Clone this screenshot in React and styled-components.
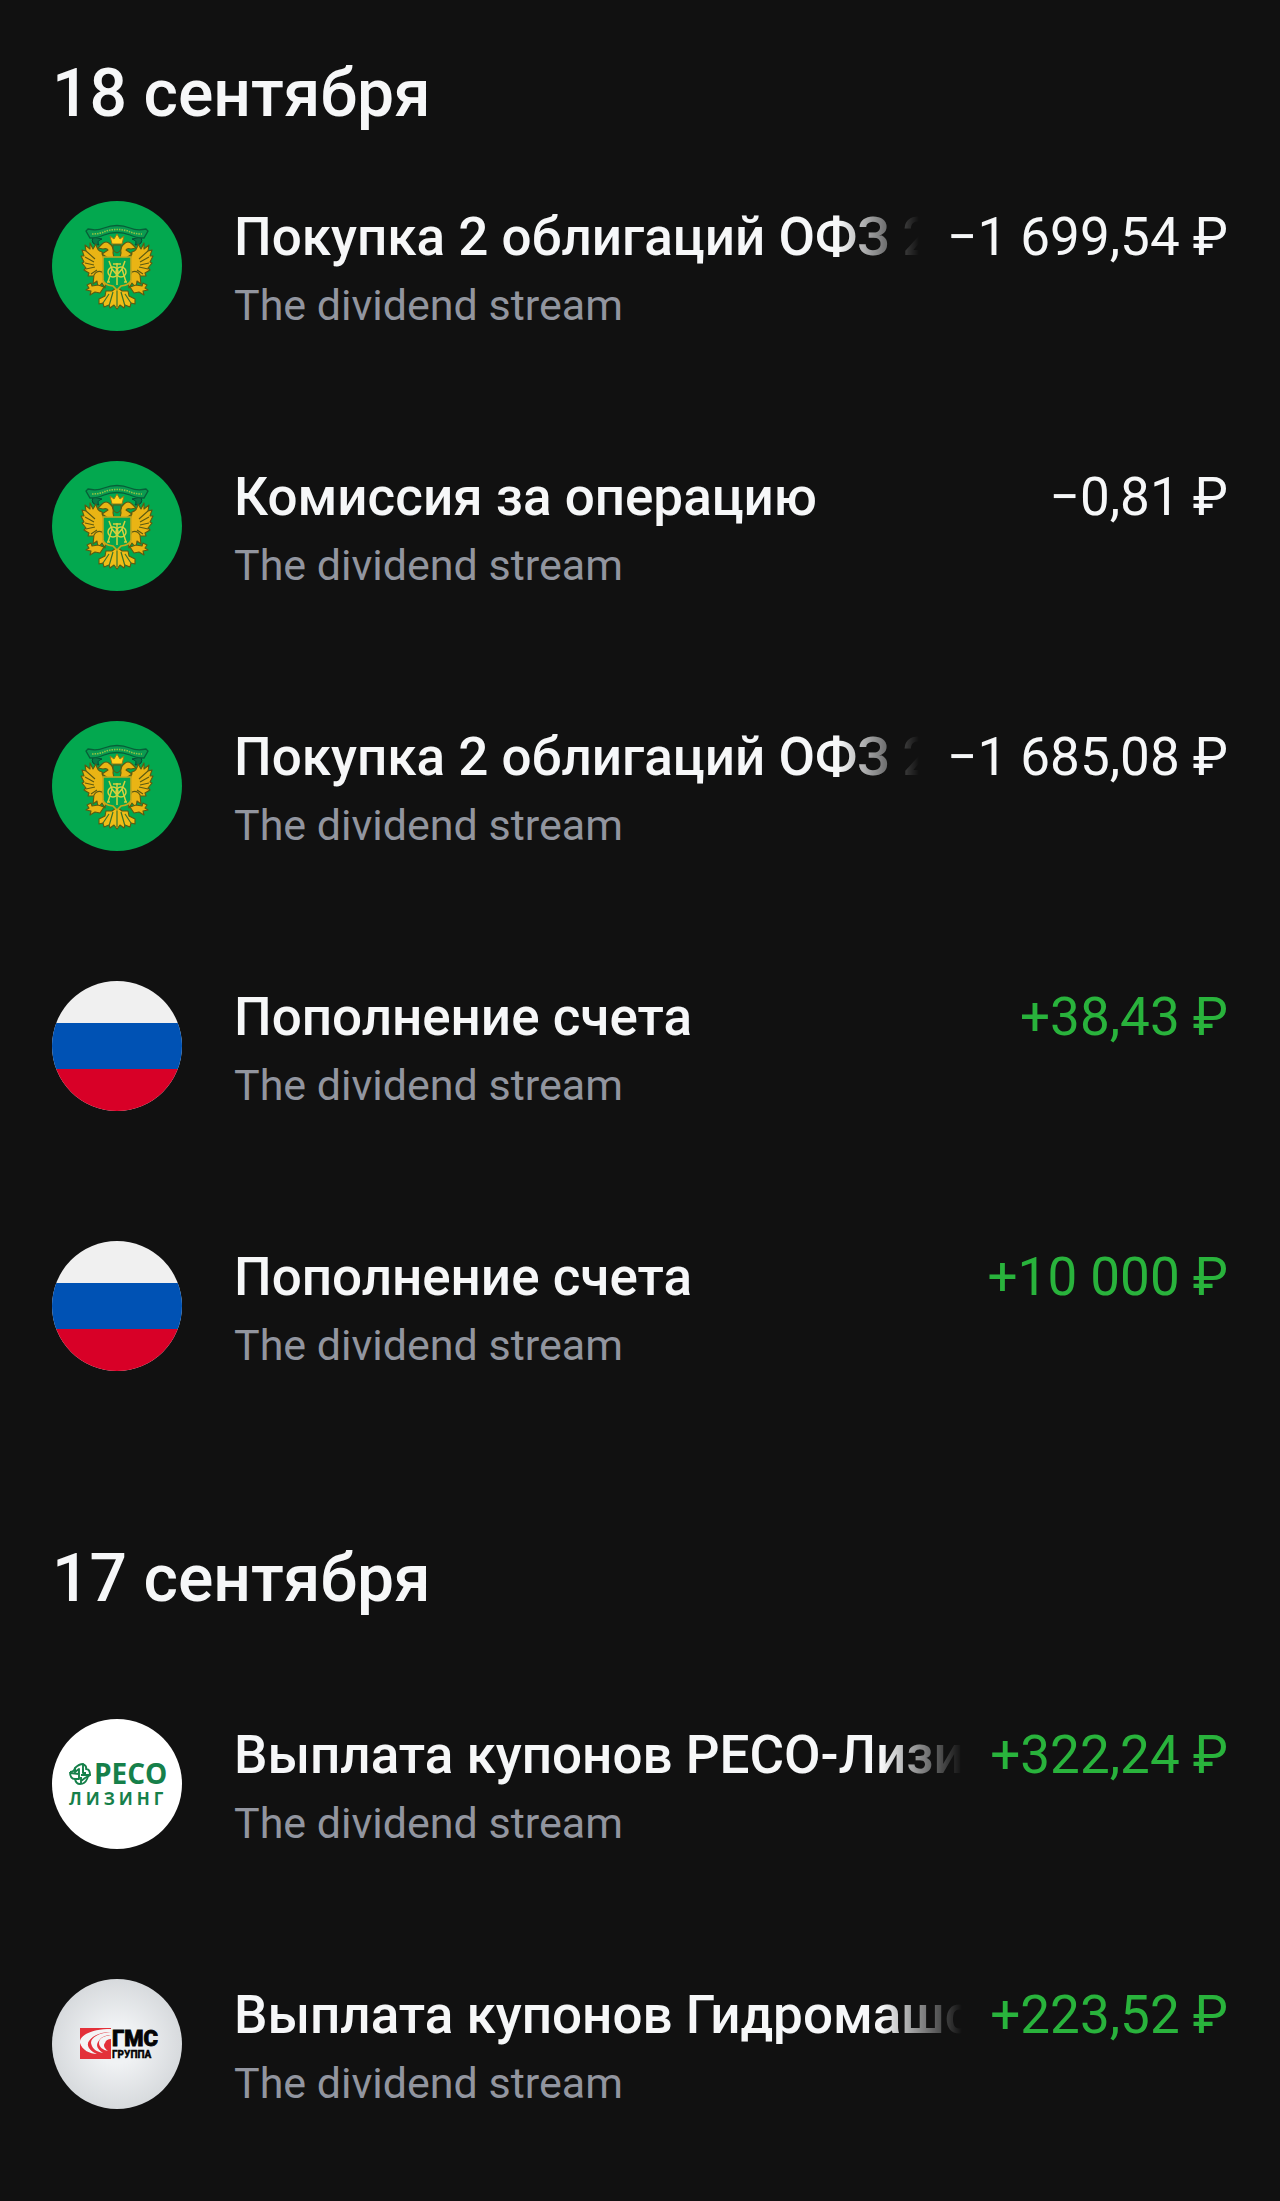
import React from "react";
import styled, { createGlobalStyle } from "styled-components";

const GlobalStyle = createGlobalStyle`
  body {
    margin: 0;
    background-color: #111111;
    color: #f6f7f8;
    font-family: Roboto, "Noto Sans", sans-serif;
  }
`;

const Feed = styled.main`
  box-sizing: border-box;
  min-height: 100vh;
  padding: 54px 52px 80px;
`;

const Day = styled.section`
  & + & {
    margin-top: 162px;
  }
`;

const DayTitle = styled.h2`
  margin: 0 0 ${(props) => (props.$spaced ? "100px" : "67px")};
  font-size: 66px;
  line-height: 80px;
  font-weight: 500;
`;

const OperationList = styled.ul`
  display: flex;
  flex-direction: column;
  gap: 124px;
  margin: 0;
  padding: 0;
  list-style: none;
`;

const OperationRow = styled.li`
  display: flex;
  align-items: flex-start;
  gap: 52px;
`;

const Avatar = styled.svg`
  flex: none;
  width: 130px;
  height: 130px;
  border-radius: 50%;
`;

const Details = styled.div`
  flex: 1;
  min-width: 0;
`;

const TopLine = styled.div`
  display: flex;
  gap: 28px;
  font-size: 53px;
  line-height: 72px;
`;

const Title = styled.span`
  flex: 1;
  min-width: 0;
  overflow: hidden;
  white-space: nowrap;
  font-weight: 500;
  mask-image: linear-gradient(to right, #000 calc(100% - 80px), transparent);
`;

const Amount = styled.span`
  white-space: nowrap;
  color: ${(props) => (props.$income ? "#29b33c" : "inherit")};
`;

const Account = styled.div`
  color: #92959f;
  font-size: 43px;
  line-height: 64px;
`;

const EagleHalf = () => (
  <g fill="#e9b414" stroke="#5b5a12" strokeWidth="1.1" strokeLinejoin="round">
    <path d="M50 51q-5-1-6-8l-3 5-3-6v6l-5-4 1 6-4-1 2 6-3 0 3 6-2 1 4 5-2 2 5 3-1 3 7 0-1 5 6-5 4 2-1-7 3-3z" />
    <path d="M34 50l9 8M33 56l9 5M33 62l9 2M34 68l9-2M39 73l6-4" fill="none" />
    <path d="M50 71q-5-2-8 3l-1 9 4-3 1 7 4-5 3 5 1-9z" />
    <path d="M46 84l-6 1-1-3-4 2 2 3-3 2 5 1-1 4 5-3 5 1 4-6z" />
    <path d="M61 52q1-6-3-9-4-4-8 0l-4 4 5 1q4-1 5 1l-6 4 6 4h6z" />
  </g>
);

const MinfinLogo = () => (
  <Avatar viewBox="0 0 130 130" aria-hidden="true">
    <rect width="130" height="130" fill="#03a84f" />
    <path d="M41 36q-3 8 6 8-3-4 3-6zM89 36q3 8-6 8 3-4-3-6z" fill="#0a7a46" stroke="#064c35" />
    <path
      d="M36 28q9 2 16-1 13-5 26 0 7 3 16 1l2 2-4 7q-8 0-14-3-13-5-26 0-6 3-14 3l-4-7z"
      fill="#0b9a50"
      stroke="#075f38"
      strokeWidth="1.3"
    />
    <path d="M40 33q8 0 14-3 11-3 22 0 6 3 14 3" fill="none" stroke="#8fc443" strokeWidth="1.6" strokeDasharray="1.5 1" />
    <EagleHalf />
    <g transform="matrix(-1 0 0 1 130 0)">
      <EagleHalf />
    </g>
    <path d="M60 43l-2-8 4 3 3-5 3 5 4-3-2 8z" fill="#ffd21c" stroke="#927716" />
    <path d="M61 44h8v4q-1 3-4 4-3-1-4-4z" fill="#09994e" stroke="#5b5a12" />
    <path
      d="M65 86l-5 4-6 0-1 5-6 3 0 5 4-1 1 4 5-2 1 3 4-3 3 4 3-4 4 3 1-3 5 2 1-4 4 1 0-5-6-3-1-5-6 0z"
      fill="#efbd17"
      stroke="#5b5a12"
      strokeWidth="1.1"
      strokeLinejoin="round"
    />
    <path d="M65 89v17M61 91l-4 14M69 91l4 14M57 93l-6 9M73 93l6 9" stroke="#3a742b" strokeWidth="1.2" />
    <path d="M51 56h28v23q-1 5-10 6l-4 4-4-4q-9-1-10-6z" fill="#04a650" stroke="#c9a71b" strokeWidth="1.6" />
    <g fill="none" stroke="#d5d13d" strokeWidth="1.5">
      <path d="M57 60l3 8-4 13M73 60l-3 8 4 13M60 68l5 6 5-6M65 62v22M61 63h8M55 81h3M72 81h3" />
      <ellipse cx="61" cy="71" rx="5" ry="5" />
      <ellipse cx="69" cy="71" rx="5" ry="5" />
    </g>
  </Avatar>
);

const FlagLogo = () => (
  <Avatar viewBox="0 0 130 130" aria-hidden="true">
    <rect width="130" height="130" fill="#f0f0f0" />
    <rect y="42" width="130" height="46" fill="#0052b4" />
    <rect y="88" width="130" height="42" fill="#d80027" />
  </Avatar>
);

const ResoLogo = () => (
  <Avatar viewBox="0 0 130 130">
    <rect width="130" height="130" fill="#fff" />
    <g fill="none" stroke="#16804a" strokeWidth="1.9" strokeLinejoin="round">
      <path d="M27 54V50l-4 3V49q4-4 8-4v9M18 54l9 1M18 53q0 7 5 7h4v-6" />
      <path d="M31 45q4 2 3 5 4 0 4 6-2 0-3 4-2 5-7 5-4 0-5-5M23 49q-1 4-5 4" />
      <path d="M31 50v4h3M29 58v4l4-3 5-3h-9M29 65v-3" />
    </g>
    <g fill="#16804a" fontFamily="'Open Sans', sans-serif" fontWeight="700">
      <text x="42" y="65" fontSize="28">РЕСО</text>
      <text x="17" y="86" fontSize="17" letterSpacing="4">ЛИЗИНГ</text>
    </g>
  </Avatar>
);

const GmsLogo = () => (
  <Avatar viewBox="0 0 130 130">
    <defs>
      <radialGradient id="gmsShade">
        <stop offset="0.3" stopColor="#f0f2f4" />
        <stop offset="1" stopColor="#d7dadd" />
      </radialGradient>
    </defs>
    <rect width="130" height="130" fill="url(#gmsShade)" />
    <rect x="28" y="49" width="31" height="31" fill="#e3313a" />
    <g fill="#f4f4f5">
      <path d="M59 50C40 50 27 56 28 64c2 7 10 11 17 11-8-3-11-9-8-13 4-6 13-9 22-9z" />
      <path d="M59 53c-12 1-20 5-20 11 1 6 6 9 12 10-6-4-7-8-5-11 3-5 7-7 13-7z" />
      <path d="M59 56c-7 1-12 3-12 8 0 4 4 7 9 8-4-3-5-6-3-8 1-3 3-4 6-4z" />
    </g>
    <g fill="#050505" stroke="#050505" fontFamily="Roboto, sans-serif" fontWeight="900">
      <text x="60" y="67" fontSize="22" strokeWidth="0.8">ГМС</text>
      <text x="60" y="79" fontSize="10" strokeWidth="0.3">ГРУППА</text>
    </g>
  </Avatar>
);

const ACCOUNT = "The dividend stream";

const days = [
  {
    date: "18 сентября",
    operations: [
      { logo: MinfinLogo, title: "Покупка 2 облигаций ОФЗ 2", amount: "−1 699,54 ₽" },
      { logo: MinfinLogo, title: "Комиссия за операцию", amount: "−0,81 ₽" },
      { logo: MinfinLogo, title: "Покупка 2 облигаций ОФЗ 2", amount: "−1 685,08 ₽" },
      { logo: FlagLogo, title: "Пополнение счета", amount: "+38,43 ₽", income: true },
      { logo: FlagLogo, title: "Пополнение счета", amount: "+10 000 ₽", income: true },
    ],
  },
  {
    date: "17 сентября",
    spaced: true,
    operations: [
      { logo: ResoLogo, title: "Выплата купонов РЕСО-Лизи", amount: "+322,24 ₽", income: true },
      { logo: GmsLogo, title: "Выплата купонов Гидромашс", amount: "+223,52 ₽", income: true },
    ],
  },
];

const Operation = ({ logo: Logo, title, amount, income }) => {
  return (
    <OperationRow>
      <Logo />
      <Details>
        <TopLine>
          <Title>{title}</Title>
          <Amount $income={income}>{amount}</Amount>
        </TopLine>
        <Account>{ACCOUNT}</Account>
      </Details>
    </OperationRow>
  );
};

const App = () => {
  return (
    <>
      <GlobalStyle />
      <Feed>
        {days.map((day) => (
          <Day key={day.date}>
            <DayTitle $spaced={day.spaced}>{day.date}</DayTitle>
            <OperationList>
              {day.operations.map((operation, index) => (
                <Operation key={index} {...operation} />
              ))}
            </OperationList>
          </Day>
        ))}
      </Feed>
    </>
  );
};

export default App;
